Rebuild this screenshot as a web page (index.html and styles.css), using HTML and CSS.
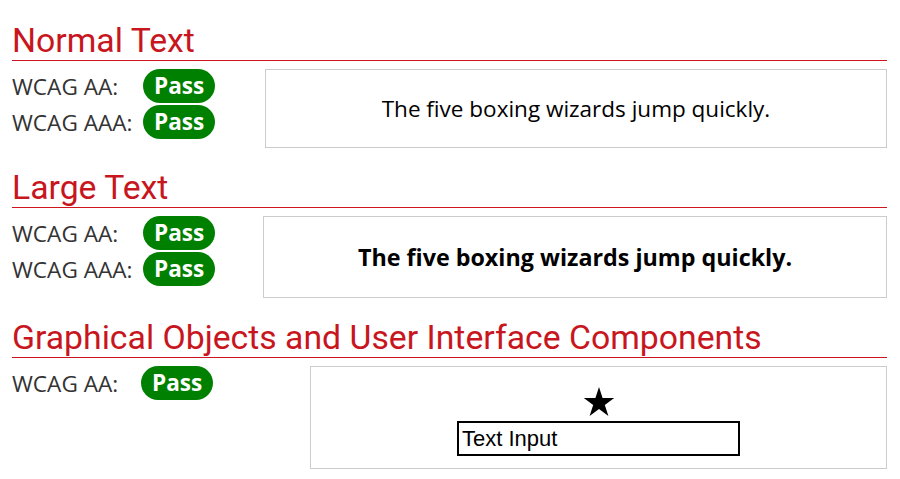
FILE: index.html
```html
<!DOCTYPE html>
<html lang="en">
<head>
<meta charset="utf-8">
<title>Contrast results</title>
<link rel="stylesheet" href="styles.css">
</head>
<body>
<main class="page">
  <section class="sec">
    <h2 class="sec-title">Normal Text</h2>
    <div class="sec-body">
      <div class="results results--normal">
        <span class="label">WCAG AA:</span><span class="badge">Pass</span>
        <span class="label">WCAG AAA:</span><span class="badge">Pass</span>
      </div>
      <div class="sample sample--normal">The five boxing wizards jump quickly.</div>
    </div>
  </section>
  <section class="sec">
    <h2 class="sec-title">Large Text</h2>
    <div class="sec-body">
      <div class="results results--large">
        <span class="label">WCAG AA:</span><span class="badge">Pass</span>
        <span class="label">WCAG AAA:</span><span class="badge">Pass</span>
      </div>
      <div class="sample sample--large">The five boxing wizards jump quickly.</div>
    </div>
  </section>
  <section class="sec">
    <h2 class="sec-title">Graphical Objects and User Interface Components</h2>
    <div class="sec-body">
      <div class="results results--ui">
        <span class="label">WCAG AA:</span><span class="badge">Pass</span>
      </div>
      <div class="sample sample--ui">
        <svg class="star" width="32" height="29" viewBox="0 0 32 29" aria-hidden="true">
          <polygon points="16,0 19.59,11.06 31.22,11.06 21.81,17.89 25.4,28.94 16,22.11 6.6,28.94 10.19,17.89 0.78,11.06 12.41,11.06" fill="#000"/>
        </svg>
        <input class="text-input" type="text" value="Text Input">
      </div>
    </div>
  </section>
</main>
</body>
</html>
```

FILE: styles.css
```css
html, body {
  margin: 0;
  padding: 0;
  background: #fff;
}

.page {
  padding: 22px 13px 0 12px;
  display: flex;
  flex-direction: column;
  gap: 21px;
  font-family: "Open Sans", "Liberation Sans", sans-serif;
}

.sec-title {
  margin: 0;
  font-family: Roboto, "Liberation Sans", sans-serif;
  font-weight: 400;
  font-size: 33.75px;
  line-height: 38px;
  color: #c8161e;
  border-bottom: 1px solid #d0141e;
}

.sec-body {
  display: flex;
  align-items: flex-start;
  margin-top: 8px;
}

.results {
  display: grid;
  grid-template-columns: 131px auto;
  grid-auto-rows: 34px;
  row-gap: 2px;
  align-items: center;
  justify-items: start;
  flex: none;
}

.results--normal { width: 253px; }
.results--large { width: 251px; }
.results--ui { width: 298px; grid-template-columns: 129px auto; }

.label {
  font-size: 22.6px;
  color: #333;
}

.badge {
  display: inline-block;
  background: #008000;
  color: #fff;
  font-weight: 700;
  font-size: 22.6px;
  line-height: 34px;
  height: 34px;
  padding: 0 11px;
  border-radius: 17px;
}

.sample {
  flex: 1;
  border: 1px solid #ccc;
  display: flex;
  align-items: center;
  justify-content: center;
  color: #000;
  font-size: 22.5px;
  box-sizing: border-box;
}

.sample--normal { height: 79px; }
.sample--large { height: 82px; font-weight: 700; font-size: 23.3px; }

.sample--ui {
  flex-direction: column;
  justify-content: flex-start;
  padding: 20px 0 12px;
  gap: 5px;
}

.star {
  display: block;
}

.text-input {
  box-sizing: border-box;
  width: 283px;
  height: 35px;
  margin: 0;
  border: 2px solid #000;
  border-radius: 0;
  padding: 0 3px;
  font-family: "Liberation Sans", Arial, sans-serif;
  font-size: 22px;
  color: #000;
  background: #fff;
  outline: none;
}
```
